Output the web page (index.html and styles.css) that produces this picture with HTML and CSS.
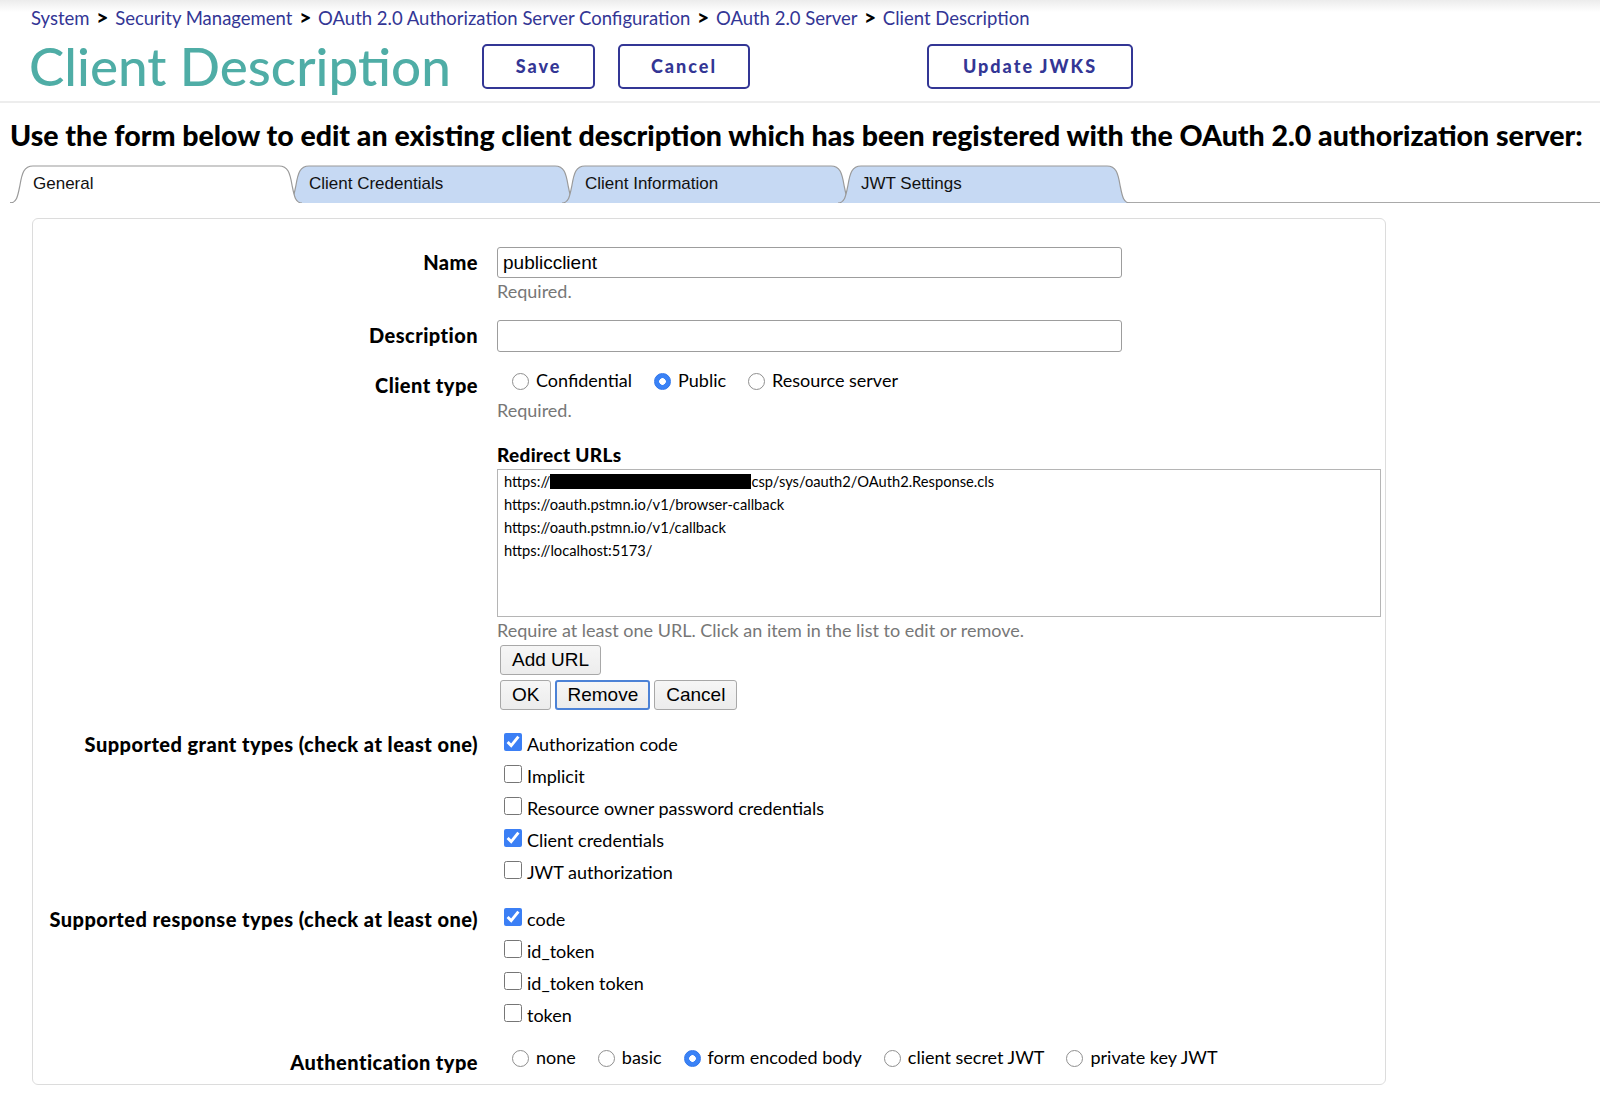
FILE: index.html
```html
<!DOCTYPE html>
<html lang="en">
<head>
    <meta charset="UTF-8">
    <meta name="viewport" content="width=device-width, initial-scale=1.0">
    <title>Client Description</title>
    <link rel="stylesheet" href="styles.css">
</head>
<body>
    <header class="page-head">
        <nav class="crumbs">
            <a href="#">System</a> <span class="sep">&gt;</span>
            <a href="#">Security Management</a> <span class="sep">&gt;</span>
            <a href="#">OAuth 2.0 Authorization Server Configuration</a> <span class="sep">&gt;</span>
            <a href="#">OAuth 2.0 Server</a> <span class="sep">&gt;</span>
            <a href="#">Client Description</a>
        </nav>
        <div class="title-row">
            <h1>Client Description</h1>
            <button type="button" class="btn-outline btn-save">Save</button>
            <button type="button" class="btn-outline btn-cancel">Cancel</button>
            <button type="button" class="btn-outline btn-jwks">Update JWKS</button>
        </div>
    </header>

    <h2 class="intro">Use the form below to edit an existing client description which has been registered with the OAuth 2.0 authorization server:</h2>

    <div class="tabs">
        <div class="tab active">
            <svg class="tab-shape" viewBox="0 0 292 38" preserveAspectRatio="none"><path d="M0,38 C7,38 8,30 10,20 C12,8 14,1 23,1 L269,1 C278,1 280,8 282,20 C284,30 285,38 292,38" /></svg>
            <span>General</span>
        </div>
        <div class="tab">
            <svg class="tab-shape" viewBox="0 0 292 38" preserveAspectRatio="none"><path d="M0,38 C7,38 8,30 10,20 C12,8 14,1 23,1 L269,1 C278,1 280,8 282,20 C284,30 285,38 292,38" /></svg>
            <span>Client Credentials</span>
        </div>
        <div class="tab">
            <svg class="tab-shape" viewBox="0 0 292 38" preserveAspectRatio="none"><path d="M0,38 C7,38 8,30 10,20 C12,8 14,1 23,1 L269,1 C278,1 280,8 282,20 C284,30 285,38 292,38" /></svg>
            <span>Client Information</span>
        </div>
        <div class="tab">
            <svg class="tab-shape" viewBox="0 0 292 38" preserveAspectRatio="none"><path d="M0,38 C7,38 8,30 10,20 C12,8 14,1 23,1 L269,1 C278,1 280,8 282,20 C284,30 285,38 292,38" /></svg>
            <span>JWT Settings</span>
        </div>
    </div>

    <div class="card">
        <form class="form-grid">
            <label class="lbl lbl-input" for="name">Name</label>
            <div class="field">
                <input type="text" id="name" class="text-input" value="publicclient">
                <div class="note">Required.</div>
            </div>

            <label class="lbl lbl-input row-desc" for="desc">Description</label>
            <div class="field row-desc">
                <input type="text" id="desc" class="text-input">
            </div>

            <div class="lbl lbl-radio row-type">Client type</div>
            <div class="field row-type">
                <div class="radio-line">
                    <label class="opt"><input type="radio" name="ctype"> Confidential</label>
                    <label class="opt"><input type="radio" name="ctype" checked> Public</label>
                    <label class="opt"><input type="radio" name="ctype"> Resource server</label>
                </div>
                <div class="note note-type">Required.</div>

                <div class="sub-head">Redirect URLs</div>
                <div class="url-list">
                    <div class="url-item">https://<span class="redact"></span>csp/sys/oauth2/OAuth2.Response.cls</div>
                    <div class="url-item">https://oauth.pstmn.io/v1/browser-callback</div>
                    <div class="url-item">https://oauth.pstmn.io/v1/callback</div>
                    <div class="url-item">https://localhost:5173/</div>
                </div>
                <div class="note note-url">Require at least one URL. Click an item in the list to edit or remove.</div>
                <div class="btn-line">
                    <button type="button" class="btn-small">Add URL</button>
                </div>
                <div class="btn-line">
                    <button type="button" class="btn-small">OK</button>
                    <button type="button" class="btn-small focused">Remove</button>
                    <button type="button" class="btn-small">Cancel</button>
                </div>
            </div>

            <div class="lbl lbl-check row-grant">Supported grant types (check at least one)</div>
            <div class="field checks row-grant">
                <label class="chk"><input type="checkbox" checked> Authorization code</label>
                <label class="chk"><input type="checkbox"> Implicit</label>
                <label class="chk"><input type="checkbox"> Resource owner password credentials</label>
                <label class="chk"><input type="checkbox" checked> Client credentials</label>
                <label class="chk"><input type="checkbox"> JWT authorization</label>
            </div>

            <div class="lbl lbl-check row-resp">Supported response types (check at least one)</div>
            <div class="field checks row-resp">
                <label class="chk"><input type="checkbox" checked> code</label>
                <label class="chk"><input type="checkbox"> id_token</label>
                <label class="chk"><input type="checkbox"> id_token token</label>
                <label class="chk"><input type="checkbox"> token</label>
            </div>

            <div class="lbl lbl-radio row-auth">Authentication type</div>
            <div class="field row-auth">
                <div class="radio-line">
                    <label class="opt"><input type="radio" name="auth"> none</label>
                    <label class="opt"><input type="radio" name="auth"> basic</label>
                    <label class="opt"><input type="radio" name="auth" checked> form encoded body</label>
                    <label class="opt"><input type="radio" name="auth"> client secret JWT</label>
                    <label class="opt"><input type="radio" name="auth"> private key JWT</label>
                </div>
            </div>
        </form>
    </div>
</body>
</html>
```

FILE: styles.css
```css
body {
    margin: 0;
    padding: 0;
    font-family: Lato, "Noto Sans", sans-serif;
    color: #000;
    background-color: #fff;
}

/* header */
.page-head {
    background: linear-gradient(#ececec, #fff 12px);
    border-bottom: 2px solid #ededed;
    height: 101px;
}
.crumbs {
    padding: 6px 0 0 31px;
    font-size: 18.5px;
    line-height: 22px;
    height: 22px;
    white-space: nowrap;
}
.crumbs a {
    color: #333695;
    text-decoration: none;
}
.crumbs .sep {
    color: #000;
    font-weight: 900;
    font-size: 21px;
    padding: 0 2px;
}
.title-row {
    display: flex;
    align-items: center;
    padding-left: 29px;
    margin-top: 10px;
}
.title-row h1 {
    margin: 0;
    font-size: 53px;
    font-weight: 500;
    line-height: 56px;
    color: #4fada6;
    width: 418px;
    white-space: nowrap;
}
.btn-outline {
    height: 45px;
    border: 2px solid #333695;
    border-radius: 5px;
    background: #fff;
    color: #333695;
    font-family: Lato, sans-serif;
    font-weight: 900;
    font-size: 18px;
    letter-spacing: 2px;
    cursor: pointer;
}
.btn-save { width: 113px; margin-left: 35px; }
.btn-cancel { width: 132px; margin-left: 23px; }
.btn-jwks { width: 206px; margin-left: 177px; }

.intro {
    margin: 15px 0 0 10px;
    font-size: 28.5px;
    font-weight: 900;
    line-height: 34px;
    white-space: nowrap;
}

/* tabs */
.tabs {
    display: flex;
    margin: 13px 0 0 10px;
    border-bottom: 1px solid #a9a9a9;
    height: 37px;
}
.tab {
    position: relative;
    width: 292px;
    height: 38px;
    margin-left: -16px;
    font-family: "Liberation Sans", Arial, sans-serif;
    font-size: 17px;
    line-height: 30px;
    color: #111;
}
.tab:first-child { margin-left: 0; }
.tab span {
    position: relative;
    padding-left: 23px;
    top: 4px;
}
.tab-shape {
    position: absolute;
    left: 0;
    top: 0;
    width: 100%;
    height: 100%;
}
.tab-shape path {
    fill: #c6d9f3;
    stroke: #9a9a9a;
    stroke-width: 1.2;
    vector-effect: non-scaling-stroke;
}
.tab.active { z-index: 2; }
.tab.active .tab-shape path { fill: #fff; }

/* card */
.card {
    margin: 15px 0 0 32px;
    width: 1354px;
    border: 1px solid #dcdcdc;
    border-radius: 6px;
    padding: 28px 0 7px 0;
    box-sizing: border-box;
}
.form-grid {
    display: grid;
    grid-template-columns: 445px 1fr;
    column-gap: 19px;
    align-items: start;
}
.lbl {
    text-align: right;
    font-weight: 900;
    font-size: 20px;
    letter-spacing: 0.45px;
    white-space: nowrap;
}
.lbl-input { line-height: 31px; }
.lbl-radio { line-height: 30px; padding-top: 5px; }
.lbl-check { line-height: 32px; }

.row-desc { margin-top: 19px; }
.row-type { margin-top: 13px; }
.row-grant { margin-top: 18px; }
.row-resp { margin-top: 15px; }
.row-auth { margin-top: 11px; }

.field {
    font-size: 18px;
}
.text-input {
    display: block;
    width: 625px;
    height: 31px;
    box-sizing: border-box;
    border: 1px solid #9d9d9d;
    border-radius: 3px;
    padding: 0 5px;
    font-family: "Liberation Sans", Arial, sans-serif;
    font-size: 19px;
    color: #000;
}
.row-desc .text-input { height: 32px; }
.note {
    color: #777;
    font-size: 18px;
    line-height: 20px;
    margin-top: 3px;
}
.note-type { margin-top: 5px; }

.radio-line {
    display: flex;
    align-items: center;
    height: 30px;
}
.opt {
    display: flex;
    align-items: center;
    margin-right: 15px;
}
.opt input {
    appearance: none;
    -webkit-appearance: none;
    width: 17px;
    height: 17px;
    margin: 2px 7px 0 15px;
    border: 1px solid #8f8f8f;
    border-radius: 50%;
    background: #fff;
}
.opt:not(:first-child) input { margin-left: 7px; }
.opt input:checked {
    border-color: #2f75ea;
    background: radial-gradient(circle, #fff 0 3px, #3a82f6 3.6px);
}

.sub-head {
    font-weight: 900;
    font-size: 19px;
    letter-spacing: 0.3px;
    line-height: 20px;
    margin-top: 25px;
}
.url-list {
    margin-top: 4px;
    width: 884px;
    height: 148px;
    box-sizing: border-box;
    border: 1px solid #b5b5b5;
    padding: 0 6px;
    font-size: 14.7px;
}
.url-item {
    line-height: 23px;
    height: 23px;
    display: flex;
    align-items: center;
}
.redact {
    display: inline-block;
    width: 201px;
    height: 15px;
    background: #000;
}
.note-url { margin-top: 3px; }

.btn-line {
    display: flex;
    gap: 4px;
    margin-top: 5px;
    padding-left: 3px;
}
.btn-small {
    height: 30px;
    padding: 0 11px;
    border: 1px solid #a8a8a8;
    border-radius: 3px;
    background: linear-gradient(#f6f6f6, #ececec);
    font-family: "Liberation Sans", Arial, sans-serif;
    font-size: 19px;
    color: #000;
}
.btn-small.focused {
    border: 2px solid #4c82d6;
    padding: 0 10px;
}

.checks .chk {
    display: flex;
    align-items: center;
    height: 32px;
}
.chk input {
    width: 18px;
    height: 18px;
    margin: 0 5px 4px 7px;
    accent-color: #3b7ff5;
}
```
